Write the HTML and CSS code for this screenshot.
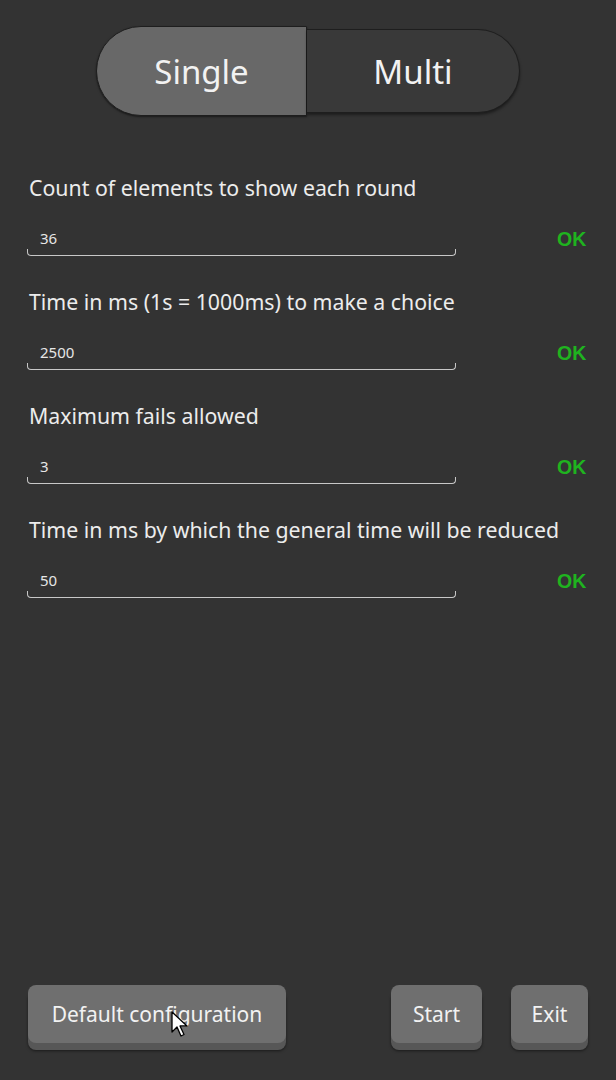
FILE: index.html
```html
<!DOCTYPE html>
<html>
<head>
<meta charset="utf-8">
<link rel="stylesheet" href="styles.css">
</head>
<body>
<div class="app">
  <div class="toggle">
    <div class="seg seg-on">Single</div>
    <div class="seg seg-off">Multi</div>
  </div>
  <div class="fields">
    <div class="field">
      <div class="label">Count of elements to show each round</div>
      <div class="row">
        <div class="input">36</div>
        <div class="ok">OK</div>
      </div>
    </div>
    <div class="field">
      <div class="label">Time in ms (1s = 1000ms) to make a choice</div>
      <div class="row">
        <div class="input">2500</div>
        <div class="ok">OK</div>
      </div>
    </div>
    <div class="field">
      <div class="label">Maximum fails allowed</div>
      <div class="row">
        <div class="input">3</div>
        <div class="ok">OK</div>
      </div>
    </div>
    <div class="field">
      <div class="label">Time in ms by which the general time will be reduced</div>
      <div class="row">
        <div class="input">50</div>
        <div class="ok">OK</div>
      </div>
    </div>
  </div>
  <div class="actions">
    <div class="btn btn-default">Default configuration
      <svg class="cursor" width="20" height="28" viewBox="0 0 20 28"><path d="M1 1 L1 21 L6 16 L10 25 L13 23.5 L9 15 L16 15 Z" fill="#fff" stroke="#000" stroke-width="1.3" stroke-linejoin="round"/></svg>
    </div>
    <div class="spacer"></div>
    <div class="btn btn-start">Start</div>
    <div class="btn btn-exit">Exit</div>
  </div>
</div>
</body>
</html>
```

FILE: styles.css
```css
html, body {
  margin: 0;
  padding: 0;
  background: #333333;
}
body {
  font-family: "Noto Sans", "Open Sans", sans-serif;
  color: #f0f0f0;
}
.app {
  width: 616px;
  height: 1080px;
  display: flex;
  flex-direction: column;
  box-sizing: border-box;
}
.toggle {
  display: flex;
  align-items: center;
  margin: 26px 0 0 96px;
  height: 90px;
}
.seg {
  height: 100%;
  display: flex;
  align-items: center;
  justify-content: center;
  font-size: 33px;
  box-sizing: border-box;
}
.seg-on {
  width: 211px;
  background: #686868;
  border: 1.5px solid #1e1e1e;
  border-radius: 45px 0 0 45px;
  color: #f2f2f2;
  box-shadow: 0 1px 2px rgba(0,0,0,0.5);
}
.seg-off {
  width: 213px;
  height: 84px;
  background: #393939;
  border: 1.5px solid #1e1e1e;
  border-left: none;
  border-radius: 0 42px 42px 0;
  color: #f2f2f2;
  box-shadow: 0 2px 3px rgba(0,0,0,0.45);
}
.fields {
  display: flex;
  flex-direction: column;
  gap: 32px;
  margin-top: 58px;
  padding-left: 27px;
}
.field {
  display: flex;
  flex-direction: column;
}
.label {
  font-size: 21.3px;
  line-height: 28px;
  padding-left: 2px;
  color: #ececec;
}
.row {
  display: flex;
  align-items: flex-start;
  margin-top: 24px;
}
.input {
  width: 429px;
  height: 30px;
  box-sizing: border-box;
  border: 1.5px solid #c8c8c8;
  border-top: none;
  border-radius: 0 0 4px 4px;
  font-size: 15px;
  line-height: 24px;
  padding-left: 12px;
  color: #e6e6e6;
  position: relative;
}
.input::before, .input::after {
  content: "";
  position: absolute;
  top: 0;
  width: 3px;
  height: 23px;
  background: #333333;
}
.input::before { left: -2px; }
.input::after { right: -2px; }
.ok {
  margin-left: 101px;
  margin-top: 1px;
  font-family: "Liberation Sans", Arial, sans-serif;
  font-weight: bold;
  font-size: 19.5px;
  line-height: 24px;
  color: #1fb31f;
}
.actions {
  margin-top: auto;
  margin-bottom: 37px;
  display: flex;
  padding: 0 28px 0 28px;
  align-items: flex-start;
}
.spacer { flex: 1; }
.btn {
  height: 58px;
  background: #6f6f6f;
  border-radius: 8px;
  box-shadow: 0 7px 0 #575757, 0 8px 3px rgba(0,0,0,0.5);
  display: flex;
  align-items: center;
  justify-content: center;
  font-size: 21px;
  color: #f2f2f2;
  position: relative;
}
.btn-default { width: 258px; }
.btn-start { width: 91px; margin-right: 29px; }
.btn-exit { width: 77px; }
.cursor {
  position: absolute;
  left: 143px;
  top: 26px;
}
```
